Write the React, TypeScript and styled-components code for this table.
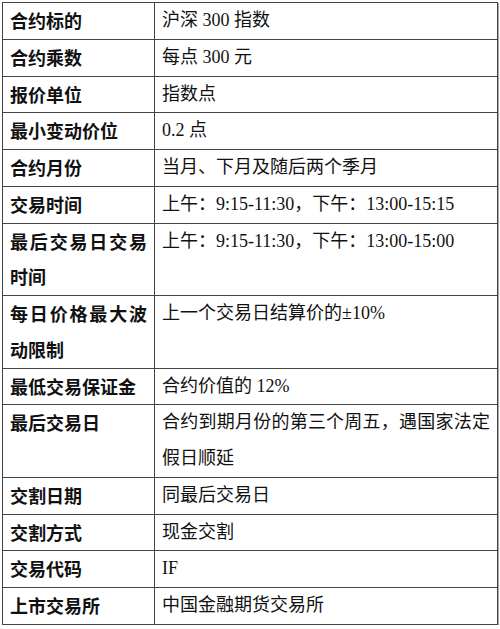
import styled, { createGlobalStyle } from 'styled-components';

const GlobalStyle = createGlobalStyle`
	html, body {
		margin: 0;
		padding: 0;
		background: #ffffff;
	}
`;

const rows: { label: string; value: string }[] = [
	{ label: '合约标的', value: '沪深 300 指数' },
	{ label: '合约乘数', value: '每点 300 元' },
	{ label: '报价单位', value: '指数点' },
	{ label: '最小变动价位', value: '0.2 点' },
	{ label: '合约月份', value: '当月、下月及随后两个季月' },
	{ label: '交易时间', value: '上午：9:15-11:30，下午：13:00-15:15' },
	{ label: '最后交易日交易时间', value: '上午：9:15-11:30，下午：13:00-15:00' },
	{ label: '每日价格最大波动限制', value: '上一个交易日结算价的±10%' },
	{ label: '最低交易保证金', value: '合约价值的 12%' },
	{ label: '最后交易日', value: '合约到期月份的第三个周五，遇国家法定假日顺延' },
	{ label: '交割日期', value: '同最后交易日' },
	{ label: '交割方式', value: '现金交割' },
	{ label: '交易代码', value: 'IF' },
	{ label: '上市交易所', value: '中国金融期货交易所' },
];

const App = () => {
	return (
		<>
			<GlobalStyle />
			<Page>
				<SpecTable>
					<colgroup>
						<col style={{ width: 152 }} />
						<col />
					</colgroup>
					<tbody>
						{rows.map((row) => (
							<tr key={row.label}>
								<LabelCell>{row.label}</LabelCell>
								<ValueCell>{row.value}</ValueCell>
							</tr>
						))}
					</tbody>
				</SpecTable>
			</Page>
		</>
	);
};

export default App;

const Page = styled.div`
	padding: 2px 0 0 2px;
	width: 500px;
	box-sizing: border-box;
`;

const SpecTable = styled.table`
	width: 496px;
	table-layout: fixed;
	border-collapse: collapse;
	border: 1px solid #444444;
	box-shadow: 1px 1px 0 #a8a8a8;
	color: #111111;
	font-size: 18px;
	line-height: 35.75px;

	td,
	th {
		border: 1px solid #444444;
		padding: 0 7px;
		vertical-align: top;
		text-align: justify;
	}
`;

const LabelCell = styled.th`
	font-family: 'Noto Sans CJK SC', 'Liberation Sans', sans-serif;
	font-weight: 700;
`;

const ValueCell = styled.td`
	font-family: 'Liberation Serif', 'Noto Sans CJK SC', serif;
	font-weight: 400;
`;
